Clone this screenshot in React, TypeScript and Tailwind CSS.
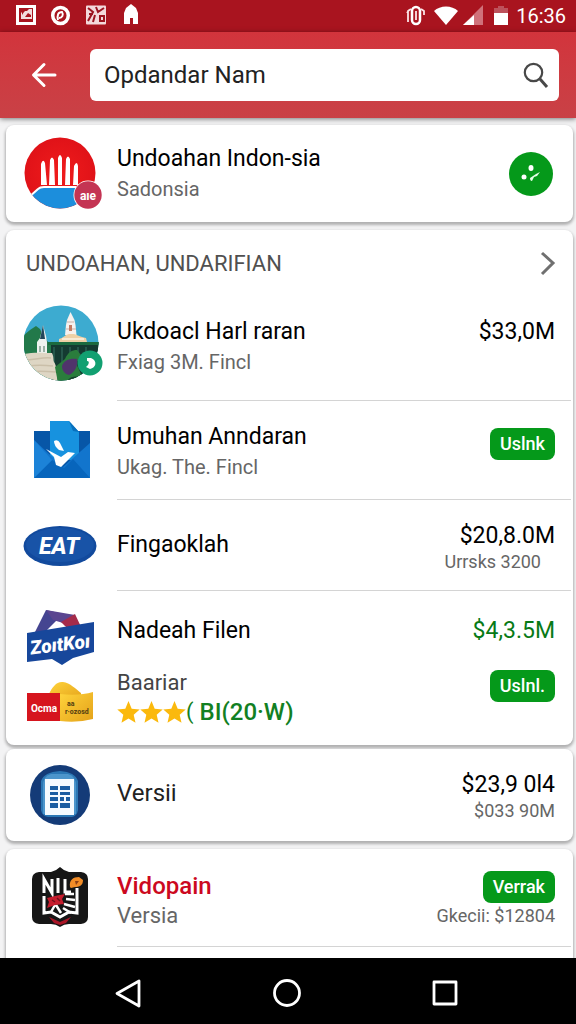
import type { ReactNode } from "react";

function StatusIcons() {
  return (
    <svg width="124" height="24" viewBox="0 0 124 24" fill="none" stroke="#fff">
      <rect x="1.5" y="2.500" width="17" height="17" strokeWidth="3" />
      <path d="M5 15V9l2-2h4l2-2h3v10z" fill="#fff" stroke="none" opacity="0.85" />
      <path d="M6 5h5L8 8l-2 3zM9 13l3-4 3 2v2z" fill="#a9141f" stroke="none" />
      <ellipse cx="44.500" cy="11.500" rx="7.800" ry="8" strokeWidth="3.500" />
      <path d="M42 16c-1-5 0-8 4-8 2 3 0 6-3 6" strokeWidth="2" />
      <rect x="70" y="1.500" width="20" height="19" rx="1" fill="#f3d9db" stroke="none" />
      <path d="M72 4l5 4-5 9M80 3l2 5 6-4M79 11l-2 7M84 12h4v5h-4zM73 10h4" stroke="#9c1420" strokeWidth="2" />
      <path d="M108 20V9l2-5 5-4 5 4 2 5v11h-5v-6h-3v6z" fill="#fff" stroke="none" />
    </svg>
  );
}

function SystemIcons() {
  return (
    <svg width="104" height="24" viewBox="0 0 104 24" fill="none">
      <rect x="8" y="3" width="8" height="17" rx="4" stroke="#fff" strokeWidth="2.500" />
      <path d="M12 7v9M7 5 4 7v11M3 9l2-3M17 5l3 2v4" stroke="#fbe4e6" strokeWidth="1.800" />
      <path d="M30 7C36 1 48 1 54 7L42 21z" fill="#fff" />
      <path d="M79 1v20H59z" fill="#d0717a" />
      <path d="M70 11v10H59z" fill="#fff" />
      <path d="M90 4h4V2h6v2h4v6H90z" fill="#bd515b" />
      <path d="M90 9h14v12H90z" fill="#fff" />
    </svg>
  );
}

function HandLogo() {
  return (
    <svg width="80" height="74" viewBox="0 0 80 74" className="-mr-2 shrink-0">
      <defs>
        <clipPath id="handClip">
          <circle cx="36" cy="36" r="35.500" />
        </clipPath>
        <radialGradient id="handRed">
          <stop offset="0" stopColor="#f01c1c" />
          <stop offset="1" stopColor="#e01218" />
        </radialGradient>
      </defs>
      <g clipPath="url(#handClip)">
        <rect width="72" height="72" fill="url(#handRed)" />
        <path d="M4 61 14 52q2-2 6-2h32l20 4v20H0z" fill="#1c8edc" />
        <path d="M4 61 14 52q2-2 6-2h32" fill="none" stroke="#fff" strokeWidth="2" />
        <path d="M17 48V27q2-6 4-1l2 22zM25 48l1-25q2-5 4 0l1 25zM34 48V21q2-6 4 0v27zM41 48l1-26q2-5 4 0v26zM49 48l1-19q3-6 4 0v19z" fill="#fff" />
      </g>
      <circle cx="64" cy="58" r="14.500" fill="#fff" />
      <circle cx="64" cy="58" r="13.700" fill="#c43453" />
      <text x="64" y="63" textAnchor="middle" fill="#fff" fontSize="12" fontWeight="700" fontFamily="Roboto, sans-serif">aıe</text>
    </svg>
  );
}

function LandscapeLogo() {
  return (
    <svg width="80" height="78" viewBox="0 0 80 78" className="-mr-2 shrink-0">
      <defs>
        <clipPath id="landClip">
          <circle cx="37" cy="38" r="37.500" />
        </clipPath>
      </defs>
      <g clipPath="url(#landClip)">
        <rect width="78" height="78" fill="#3dabd0" />
        <path d="M0 30l6-5 6-4 4 3 3 6 5 7h54v41H0z" fill="#22794a" />
        <path d="M27 37h51v41H27z" fill="#143a31" />
        <path d="M24 37h54v3H24z" fill="#1b6a3f" />
        <path d="M30 42v18M38 42v15M46 42v12M54 42v14M62 42v12" stroke="#25564a" strokeWidth="2" />
        <path d="M46.500 7l4 8 1 5 1 10H41l1-10 1-5z" fill="#f6f1ee" />
        <path d="M43 17h7M42 24h10" stroke="#c9b1a8" strokeWidth="1" />
        <path d="M45 20h3v6h-3z" fill="#c27b63" />
        <path d="M35 37v-3c4-1 6-4 10-5h5c4 1 6 3 12 4l1 4z" fill="#eed0a6" />
        <path d="M38 34h22" stroke="#f8ead4" strokeWidth="2" />
        <path d="M19 20l3 11 1 6v11H13V37l3-4z" fill="#edf2ef" />
        <path d="M19 20l2 14h-5z" fill="#23465a" />
        <path d="M16 41v6M20 41v6" stroke="#7d9a8d" strokeWidth="1.500" />
        <path d="M0 49c9-2 20-1 28-1 2 4 1 6 2 9 3 4 3 12 4 21H0z" fill="#ded6c4" />
        <path d="M3 55c9 0 15-3 24-2M3 61c10-1 16-1 26 0M8 67c8-2 15 0 24 0" stroke="#cabfa9" strokeWidth="1.500" fill="none" />
        <path d="M34 78l-3-16 10-8c3-7 7-9 12-9l4 5-5 8 9 20z" fill="#2a7d3c" />
        <path d="M38 61c2-6 8-8 15-7 1 7-2 13-8 16-4-1-7-4-7-9z" fill="#50346b" />
        <path d="M42 78c3-7 10-8 19-5v5z" fill="#183f2d" />
      </g>
      <circle cx="66" cy="58" r="12.500" fill="#12a071" />
      <path d="M63 53h4c7 3 5 10-1 11l-4-2 2-2q2-4-1-4z" fill="#fff" />
    </svg>
  );
}

function EnvelopeLogo() {
  return (
    <svg width="58" height="60" viewBox="0 0 58 60" className="ml-1 shrink-0">
      <path d="M1 11h56v47H1z" fill="#0756a7" />
      <path d="M17 1h19l10 11v28H17z" fill="#1792df" />
      <path d="M36 1l10 11-6-1z" fill="#0870bd" />
      <path d="M1 20l29 27 27-24v35H1z" fill="#1275cd" />
      <path d="M1 58l18-18 12 8 9-9 17 19z" fill="#0765bc" />
      <path d="M1 20l18 20L1 58z" fill="#1c83d8" />
      <path d="M13 29l15 8 7-5 7 1-14 14-5-2-2-8z" fill="#fff" />
      <path d="M21 21q4-2 6 2l4 8-5-1q-5-4-5-9z" fill="#fff" />
    </svg>
  );
}

function EatLogo() {
  return (
    <svg width="74" height="42" viewBox="0 0 74 42" className="shrink-0">
      <ellipse cx="37" cy="21" rx="36.500" ry="20" fill="#124a9d" />
      <ellipse cx="37" cy="20" rx="34" ry="17" fill="#1853a7" />
      <text x="36" y="29" textAnchor="middle" fill="#fff" fontSize="23" fontWeight="800" fontStyle="italic" fontFamily="Roboto, sans-serif">EAT</text>
    </svg>
  );
}

function ShieldLogo() {
  return (
    <svg width="70" height="58" viewBox="0 0 70 58" className="shrink-0">
      <path d="M10 24 21 2l17 4-18 18z" fill="#454591" />
      <path d="M21 2l29 5-12 8-10-3z" fill="#5a4590" />
      <path d="M50 6l7 15-12 2-9-9z" fill="#a42b4b" />
      <path d="M24 21l8-7 9 5-1 3z" fill="#fff" />
      <path d="M2 25 69 14v30L48 50 37 57l-10-6-25 3z" fill="#17479b" />
      <text x="35" y="43" textAnchor="middle" fill="#fff" fontSize="19" fontWeight="900" fontStyle="italic" fontFamily="Roboto, sans-serif" transform="rotate(-7 35 36)">ZoıtKoı</text>
    </svg>
  );
}

function CardsLogo() {
  return (
    <svg width="68" height="42" viewBox="0 0 68 42" className="shrink-0">
      <defs>
        <linearGradient id="gold" x2="1" y2="1">
          <stop offset="0" stopColor="#ffd43c" />
          <stop offset="1" stopColor="#e4a21a" />
        </linearGradient>
      </defs>
      <path d="M23 14c3-7 8-13 14-12 7 1 13 7 18 11v8H23z" fill="url(#gold)" />
      <path d="M34 14q19 2 33-2v27q-15 4-33 2z" fill="url(#gold)" />
      <path d="M1 13h33v28H1z" fill="#d6151e" />
      <text x="18" y="32" textAnchor="middle" fill="#fff" fontSize="10" fontWeight="700" fontFamily="Roboto, sans-serif">Ocma</text>
      <text x="41" y="26" fill="#5c4512" fontSize="7" fontWeight="800" fontFamily="Roboto, sans-serif">aa</text>
      <text x="39" y="34" fill="#5c4512" fontSize="7" fontWeight="800" fontFamily="Roboto, sans-serif">r·ozosd</text>
    </svg>
  );
}

function SheetLogo() {
  return (
    <svg width="60" height="62" viewBox="0 0 60 62" className="shrink-0">
      <circle cx="30" cy="31" r="30" fill="#143b78" />
      <path d="M11 17q3-9 19-10 15 1 18 10v29q-1 6-6 7H18q-6-1-7-7z" fill="#2b77b5" />
      <path d="M13 22q0-10 8-12h17q8 2 8 12v28H13z" fill="#5ba2d5" opacity="0.7" />
      <path d="M15 15h29v36H15z" fill="#f5faff" />
      <path d="M20 22h8v4h-8zM30 22h10v4H30zM20 28h8v3h-8zM30 28h10v3H30zM20 33h8v4h-8zM30 33h4v4h-4zM36 33h4v4h-4zM20 39h8v5h-8zM30 39h10v5H30z" fill="#1b5da2" />
    </svg>
  );
}

function BadgeLogo() {
  return (
    <svg width="56" height="60" viewBox="0 0 56 60" className="shrink-0">
      <path d="M7 5h12q5-1 9-5 4 4 9 5h12q7 1 7 7v38q0 6-7 7H37q-5 0-9 3-4-3-9-3H7q-7-1-7-7V12q0-6 7-7z" fill="#161616" />
      <path d="M17 50l11 5 11-5-5 6-6 2-6-2z" fill="#aa1627" />
      <g fill="none" stroke="#fff" strokeWidth="3">
        <path d="M12 26V12l8 14V12M26 11v15M33 12v13h6" />
        <path d="M12 29v17l7-1 9 5 9-5 8 1V21" />
        <path d="M23 38l-4 7M24 38l5 8M33 27h9M34 32l9 1M32 37l11 3M31 41l8 5" strokeWidth="2.500" />
      </g>
      <path d="M15 31l8-2 10-2-3 5 2 5-9 1-8 3 2-6z" fill="#c51d2e" />
      <path d="M20 33l3 2M25 31l3 3" stroke="#6e1019" strokeWidth="1.500" />
      <path d="M38 20c-1-7 3-10 9-10l4 3c0 6-4 7-8 7l-4 1z" fill="#f18c27" />
      <path d="M43 14h4l-3 4z" fill="#8c3f16" />
    </svg>
  );
}

function Star() {
  return (
    <svg width="23" height="24" viewBox="0 0 23 24" fill="#fbb90d" aria-hidden="true">
      <path d="M11.500 1l3.200 7.800 8 .7-6 5.300 1.800 8-7-4.300-7 4.300 1.800-8-6-5.300 8-.7z" />
    </svg>
  );
}

function ActionButton({ children }: { children: ReactNode }) {
  return (
    <button type="button" className="h-8 rounded-lg bg-[#05991a] px-2.5 text-lg leading-8 font-medium text-white">
      {children}
    </button>
  );
}

function Logo({ children }: { children: ReactNode }) {
  return <div className="flex w-[72px] shrink-0 justify-center">{children}</div>;
}

const card = "rounded-lg bg-white shadow-[0_2px_3px_1px_rgba(0,0,0,0.28)]";
const row = "flex gap-[21px] pl-[18px]";
const rowBody = "flex min-w-0 flex-1 justify-between border-b border-[#d4d4d4] pr-4 mr-0.5";
const title = "text-[23px] leading-[30px] text-black";
const sub = "text-xl leading-[30px] text-[#666]";
const note = "text-lg leading-[26px] text-[#666]";

export default function App() {
  return (
    <div className="flex min-h-screen flex-col bg-[#f3f3f4] font-[Roboto,sans-serif]">
      <div className="flex h-8 items-center justify-between bg-[#a9141f] pr-2.5 pl-4">
        <StatusIcons />
        <div className="flex items-center gap-2 text-xl text-white">
          <SystemIcons />
          <span>16:36</span>
        </div>
      </div>

      <header className="flex h-[86px] items-center bg-linear-to-b from-[#d2343c] to-[#c94146] pr-[17px] pl-[30px] shadow-[0_1px_5px_rgba(0,0,0,0.5)]">
        <button type="button" aria-label="Back" className="mr-[31px]">
          <svg width="29" height="28" viewBox="0 0 29 28" fill="none" stroke="#fff" strokeWidth="3" strokeLinecap="round" strokeLinejoin="round">
            <path d="M14 3.500L3.500 14 14 24.500M4 14h21" />
          </svg>
        </button>
        <div className="flex h-[52px] min-w-0 flex-1 items-center rounded-md bg-white pr-2.5 pl-3.5">
          <input
            type="text"
            aria-label="Search"
            defaultValue="Opdandar Nam"
            className="min-w-0 flex-1 text-2xl text-[#222] outline-none"
          />
          <button type="button" aria-label="Submit search">
            <svg width="26" height="26" viewBox="0 0 26 26" fill="none" stroke="#484848">
              <circle cx="10.500" cy="10.500" r="8.700" strokeWidth="2.200" />
              <path d="M17 17l7 8" strokeWidth="3" />
            </svg>
          </button>
        </div>
      </header>

      <main className="flex flex-1 flex-col gap-2 pt-[7px] pr-[3px] pl-1.5">
        <section className={`${card} ${row} h-[97px] items-center`}>
          <Logo>
            <HandLogo />
          </Logo>
          <div className="min-w-0 flex-1">
            <h1 className={title}>Undoahan Indon-sia</h1>
            <p className={sub}>Sadonsia</p>
          </div>
          <button type="button" aria-label="Options" className="mr-5">
            <svg width="44" height="46" viewBox="0 0 44 46">
              <circle cx="22" cy="23" r="22" fill="#05991a" />
              <ellipse cx="22" cy="17" rx="2.500" ry="3" fill="#fff" />
              <circle cx="15" cy="26" r="2.500" fill="#fff" />
              <path d="M21 27l3-2 3-2 4-2-3 4-3 1-2 4q-2 0-2-3z" fill="#e5ffe7" />
            </svg>
          </button>
        </section>

        <section className={`${card} h-[515px]`}>
          <div className="flex h-[71px] items-center justify-between pr-4 pb-1 pl-5">
            <h2 className="text-[22px] text-[#505050]">UNDOAHAN, UNDARIFIAN</h2>
            <button type="button" aria-label="Show all">
              <svg width="18" height="26" viewBox="0 0 18 26" fill="none" stroke="#707070" strokeWidth="3">
                <path d="M3 2l11 10L3 23" />
              </svg>
            </button>
          </div>
          <ul>
            <li className={`${row} h-[100px]`}>
              <div className="pt-1">
                <Logo>
                  <LandscapeLogo />
                </Logo>
              </div>
              <div className={`${rowBody} pt-4`}>
                <div>
                  <h3 className={title}>Ukdoacl Harl raran</h3>
                  <p className={sub}>Fxiag 3M. Fincl</p>
                </div>
                <p className={title}>$33,0M</p>
              </div>
            </li>
            <li className={`${row} h-[99px]`}>
              <div className="pt-[19px]">
                <Logo>
                  <EnvelopeLogo />
                </Logo>
              </div>
              <div className={`${rowBody} pt-[21px]`}>
                <div>
                  <h3 className={title}>Umuhan Anndaran</h3>
                  <p className={sub}>Ukag. The. Fincl</p>
                </div>
                <div className="pt-1.5">
                  <ActionButton>Uslnk</ActionButton>
                </div>
              </div>
            </li>
            <li className={`${row} h-[91px]`}>
              <div className="flex items-center">
                <Logo>
                  <EatLogo />
                </Logo>
              </div>
              <div className={`${rowBody} items-center`}>
                <h3 className={title}>Fingaoklah</h3>
                <div className="pt-2 text-right">
                  <p className="text-[23px] leading-[26px] text-black">$20,8.0M</p>
                  <p className={`${note} mr-3.5`}>Urrsks 3200</p>
                </div>
              </div>
            </li>
            <li className={`${row} pt-[17px]`}>
              <div className="flex flex-col gap-3.5">
                <Logo>
                  <ShieldLogo />
                </Logo>
                <Logo>
                  <CardsLogo />
                </Logo>
              </div>
              <div className="mr-0.5 flex min-w-0 flex-1 justify-between pt-2 pr-4">
                <div>
                  <h3 className={title}>Nadeah Filen</h3>
                  <p className="mt-[22px] text-[22px] leading-[30px] text-[#444]">Baariar</p>
                  <p className="flex items-center text-2xl leading-[28px] text-[#128022]">
                    <Star />
                    <Star />
                    <Star />
                    <span className="text-[22px]">(</span>
                    <span className="ml-1.5 font-medium">BI(20·W)</span>
                  </p>
                </div>
                <div className="flex flex-col items-end gap-6">
                  <p className="text-[23px] leading-[30px] text-[#087a16]">$4,3.5M</p>
                  <ActionButton>Uslnl.</ActionButton>
                </div>
              </div>
            </li>
          </ul>
        </section>

        <section className={`${card} ${row} -mt-1 h-[92px] items-center pr-[18px]`}>
          <Logo>
            <SheetLogo />
          </Logo>
          <h3 className="min-w-0 flex-1 pb-1 text-2xl leading-[30px] text-[#222]">Versii</h3>
          <div className="pt-1.5 text-right">
            <p className="text-[23px] leading-[26px] text-black">$23,9 0l4</p>
            <p className={note}>$033 90M</p>
          </div>
        </section>

        <section className={`${card} flex-1 rounded-b-none`}>
          <div className={`${row} h-[98px]`}>
            <div className="pt-[18px]">
              <Logo>
                <BadgeLogo />
              </Logo>
            </div>
            <div className={`${rowBody} pt-[22px]`}>
              <div>
                <h3 className="text-2xl leading-[30px] font-medium text-[#cc0820]">Vidopain</h3>
                <p className="text-[22px] leading-[30px] text-[#666]">Versia</p>
              </div>
              <div className="flex flex-col items-end">
                <ActionButton>Verrak</ActionButton>
                <p className={note}>Gkecii: $12804</p>
              </div>
            </div>
          </div>
        </section>
      </main>

      <nav className="sticky bottom-0 flex h-[66px] items-center justify-around bg-black pt-1 pr-[53px] pl-12">
        <button type="button" aria-label="Back">
          <svg width="28" height="32" viewBox="0 0 28 32" fill="none" stroke="#fff" strokeWidth="2.800" strokeLinejoin="round">
            <path d="M25 4v25L3 16.500z" />
          </svg>
        </button>
        <button type="button" aria-label="Home">
          <svg width="28" height="30" viewBox="0 0 28 30" fill="none" stroke="#fff" strokeWidth="2.800">
            <circle cx="14" cy="15" r="12.500" />
          </svg>
        </button>
        <button type="button" aria-label="Recent apps">
          <svg width="26" height="28" viewBox="0 0 26 28" fill="none" stroke="#fff" strokeWidth="2.800" strokeLinejoin="round">
            <rect x="2" y="3" width="22" height="22" />
          </svg>
        </button>
      </nav>
    </div>
  );
}
